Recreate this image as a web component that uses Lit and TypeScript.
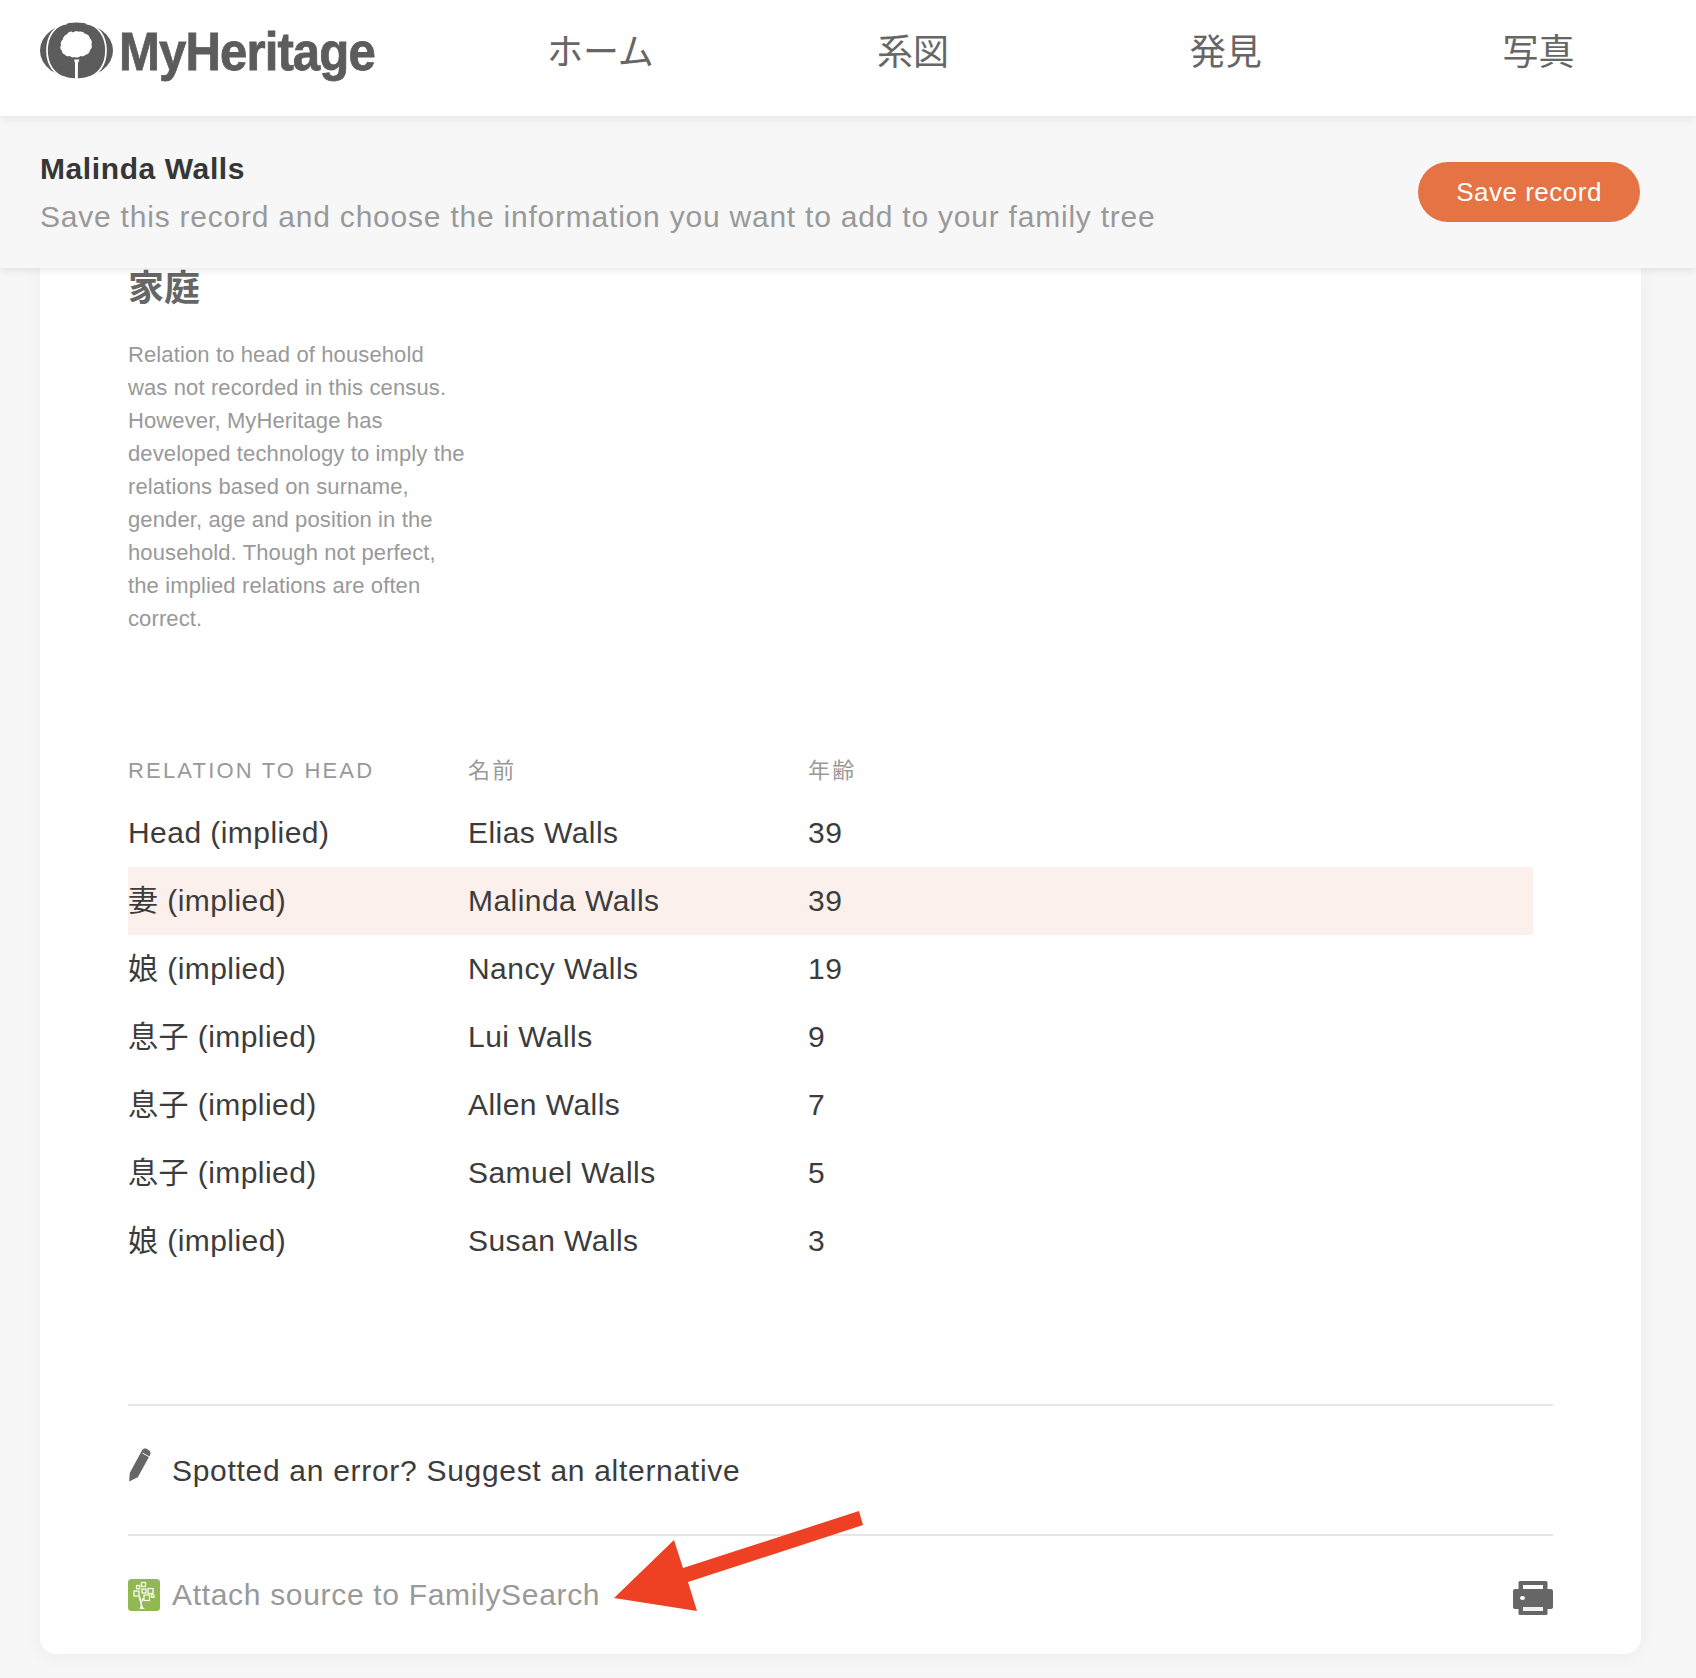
import { LitElement, html, css, svg } from "lit";
import { customElement } from "lit/decorators.js";

const rows = [
  ["Head (implied)", "Elias Walls", "39", false],
  ["妻 (implied)", "Malinda Walls", "39", true],
  ["娘 (implied)", "Nancy Walls", "19", false],
  ["息子 (implied)", "Lui Walls", "9", false],
  ["息子 (implied)", "Allen Walls", "7", false],
  ["息子 (implied)", "Samuel Walls", "5", false],
  ["娘 (implied)", "Susan Walls", "3", false],
] as const;

const noteLines = [
  "Relation to head of household",
  "was not recorded in this census.",
  "However, MyHeritage has",
  "developed technology to imply the",
  "relations based on surname,",
  "gender, age and position in the",
  "household. Though not perfect,",
  "the implied relations are often",
  "correct.",
];

const logoIcon = svg`<svg class="logo-icon" viewBox="0 0 73 57" width="73" height="57">
  <ellipse cx="36.5" cy="28.5" rx="36.5" ry="28" fill="#5c5c5c"/>
  <path d="M27 1.500C14 3 7 15 7 28.500S14 54 27 56M46 1.500C59 3 66 15 66 28.500S59 54 46 56" fill="none" stroke="#fff" stroke-width="1.700"/>
  <path d="M35 57h2.800l.2-16 1.500-3.500h-5.500l1 3.500z" fill="#fff"/>
  <path d="M33 10.500c1.500-1.500 4-1.500 5.500-.8 2.500-.7 5 .2 6.500 2 2.500.3 4.500 2.300 5 4.800 1.800 1.500 2.300 4 1.500 6 .8 2 .2 4.500-1.500 5.500-.2 2.500-2 4.500-4.500 4.800-1.500 1.700-3.500 1.700-5 1.200-1.500 1.500-4 2-6 1-1.500.8-3.500.3-4.500-1-2.300.7-4.300 0-5.500-1.800-1.800-.5-2.800-2-2.500-3.500-2-1.500-2.200-4-1-5.500-.8-2 0-4.500 1.800-5.800.2-2.500 2-4.500 4.200-5.200 1-1.700 2.500-2.500 4.500-2.700z" fill="#fff"/>
</svg>`;

const pencil = svg`<svg class="pencil" viewBox="0 0 22.500 32" width="24" height="34">
  <path d="M1 31.500l.6-8L13.200 2.200c.9-1.600 2.900-2.100 4.600-1.200l1.600.9c1.700.9 2.200 3 1.300 4.600L9.200 27.500z" fill="#666"/>
  <path d="M13.600 4.800l6.600 3.600" stroke="#fff" stroke-width=".9" fill="none"/>
</svg>`;

const tree = svg`<svg class="fs" viewBox="0 0 32 32" width="32" height="32">
  <rect width="32" height="32" rx="3.500" fill="#92b853"/>
  <g fill="none" stroke="#fff" stroke-width="1.200">
    <rect x="8.500" y="6.500" width="3.200" height="3.200"/>
    <rect x="13.500" y="3.500" width="4" height="4"/>
    <rect x="6" y="12" width="5" height="5"/>
    <rect x="14" y="10" width="4" height="4"/>
    <rect x="20" y="9.500" width="5" height="5"/>
    <rect x="16" y="16" width="5.500" height="5.500"/>
    <rect x="23.500" y="16" width="2.400" height="2.400"/>
  </g>
  <path d="M12 17c1 3 2 6 2 8 0 2 1 4 3 5h-5.500c1-2 1.500-3 1-5-.5-2-1.500-5-2-7z M14 19l2 1-2 3z" fill="#fff"/>
</svg>`;

const printer = svg`<svg class="printer" viewBox="0 0 40 34" width="40" height="34">
  <path fill="#666" fill-rule="evenodd" d="M7 0h26a1.500 1.500 0 0 1 1.500 1.500V8H38a2 2 0 0 1 2 2v16a2 2 0 0 1-2 2h-3.500v4.500A1.500 1.500 0 0 1 33 34H7a1.500 1.500 0 0 1-1.500-1.500V28H2a2 2 0 0 1-2-2V10a2 2 0 0 1 2-2h3.500V1.500A1.500 1.500 0 0 1 7 0zm3 4v4h20V4zM10 26v4h20v-4z"/>
  <ellipse cx="9.500" cy="17" rx="2.500" ry="2" fill="#fff"/>
  <rect x="10" y="26" width="20" height="4" fill="#f1f1f1"/>
</svg>`;

@customElement("app-root")
export class AppRoot extends LitElement {
  static styles = css`
    :host {
      display: block;
      min-height: 1677px;
      background: #f7f7f7;
      font-family: "Liberation Sans", "Noto Sans CJK JP", sans-serif;
      overflow: hidden;
    }
    .top {
      height: 116px;
      background: #fff;
      display: grid;
      grid-template-columns: 444px repeat(4, 312.7px);
      align-items: center;
      position: relative;
      z-index: 3;
      box-shadow: 0 2px 10px rgba(0, 0, 0, 0.08);
    }
    .logo {
      display: flex;
      align-items: center;
      gap: 6px;
      padding-left: 40px;
      color: #5c5c5c;
      margin-top: -15px;
    }
    .logo-icon { display: block; flex: none; }
    .logo-text {
      display: inline-block;
      font-size: 54px;
      font-weight: 700;
      line-height: 1;
      margin-top: 1px;
      letter-spacing: -1px;
      -webkit-text-stroke: 0.8px #5c5c5c;
      transform: scaleX(0.91);
      transform-origin: left center;
    }
    .nav {
      text-align: center;
      font-size: 36px;
      color: #666;
      line-height: 1;
      margin-top: -11px;
    }
    .save-bar {
      height: 152px;
      box-sizing: border-box;
      background: #f7f7f7;
      display: flex;
      align-items: center;
      justify-content: space-between;
      padding: 0 56px 0 40px;
      position: relative;
      z-index: 2;
      box-shadow: 0 2px 8px rgba(0, 0, 0, 0.1);
    }
    .who { font-size: 30px; font-weight: 700; color: #363636; line-height: 38px; margin-bottom: 10px; margin-top: 2px; letter-spacing: 0.6px; }
    .hint { font-size: 30px; color: #999; line-height: 38px; letter-spacing: 0.78px; }
    .save {
      width: 222px;
      height: 60px;
      border-radius: 30px;
      background: #e57343;
      color: #fff;
      font-size: 26px;
      letter-spacing: 0.5px;
      display: flex;
      align-items: center;
      justify-content: center;
    }
    main { padding: 0 55px 24px 40px; }
    .card {
      position: relative;
      background: #fff;
      border-radius: 0 0 16px 16px;
      box-shadow: 0 2px 20px rgba(0, 0, 0, 0.05);
      padding: 0 88px;
      height: 1386px;
      box-sizing: border-box;
    }
    h2 {
      margin: 0;
      padding-top: 1px;
      font-size: 36px;
      font-weight: 700;
      color: #666;
      line-height: 40px;
    }
    .note {
      margin: 29px 0 0;
      font-size: 22px;
      line-height: 33px;
      color: #999;
      letter-spacing: 0.12px;
      white-space: nowrap;
    }
    .table { margin-top: 107px; width: 1405px; }
    .row {
      display: grid;
      grid-template-columns: 340px 340px 1fr;
      height: 68px;
      align-items: center;
      font-size: 30px;
      line-height: 40px;
      letter-spacing: 0.45px;
      color: #3c3c3c;
    }
    .row.hl { background: #fcf0ec; }
    .row.head {
      height: 57px;
      font-size: 22px;
      color: #999;
      letter-spacing: 2.17px;
    }
    .suggest {
      margin-top: 129px;
      border-top: 2px solid #e6e6e6;
      height: 128px;
      display: flex;
      align-items: center;
      gap: 20px;
      color: #3c3c3c;
      font-size: 30px;
      letter-spacing: 0.7px;
    }
    .suggest span { padding-top: 2px; }
    .pencil { margin-top: -10px; flex: none; }
    .attach {
      border-top: 2px solid #e6e6e6;
      height: 118px;
      display: flex;
      align-items: center;
      color: #999;
      font-size: 30px;
      letter-spacing: 0.68px;
      gap: 12px;
    }
    .fs { flex: none; }
    .printer { margin-left: auto; margin-top: 5px; flex: none; }
    .arrow { position: absolute; left: 574px; top: 1240px; }
  `;

  render() {
    return html`
      <header class="top">
        <div class="logo">${logoIcon}<span class="logo-text">MyHeritage</span></div>
        <div class="nav">ホーム</div>
        <div class="nav">系図</div>
        <div class="nav">発見</div>
        <div class="nav">写真</div>
      </header>
      <section class="save-bar">
        <div>
          <div class="who">Malinda Walls</div>
          <div class="hint">Save this record and choose the information you want to add to your family tree</div>
        </div>
        <div class="save">Save record</div>
      </section>
      <main>
        <div class="card">
          <h2>家庭</h2>
          <p class="note">${noteLines.map((l) => html`${l}<br />`)}</p>
          <div class="table">
            <div class="row head"><span>RELATION TO HEAD</span><span>名前</span><span>年齢</span></div>
            ${rows.map(
              (r) => html`<div class="row ${r[3] ? "hl" : ""}"><span>${r[0]}</span><span>${r[1]}</span><span>${r[2]}</span></div>`
            )}
          </div>
          <div class="suggest">${pencil}<span>Spotted an error? Suggest an alternative</span></div>
          <div class="attach">${tree}<span>Attach source to FamilySearch</span>${printer}</div>
          <svg class="arrow" width="250" height="130" viewBox="0 0 250 130">
            <polygon fill="#ee4124" points="245,3 249,17 74,74 83,103 0,90 60,32 69,60" />
          </svg>
        </div>
      </main>
    `;
  }
}
